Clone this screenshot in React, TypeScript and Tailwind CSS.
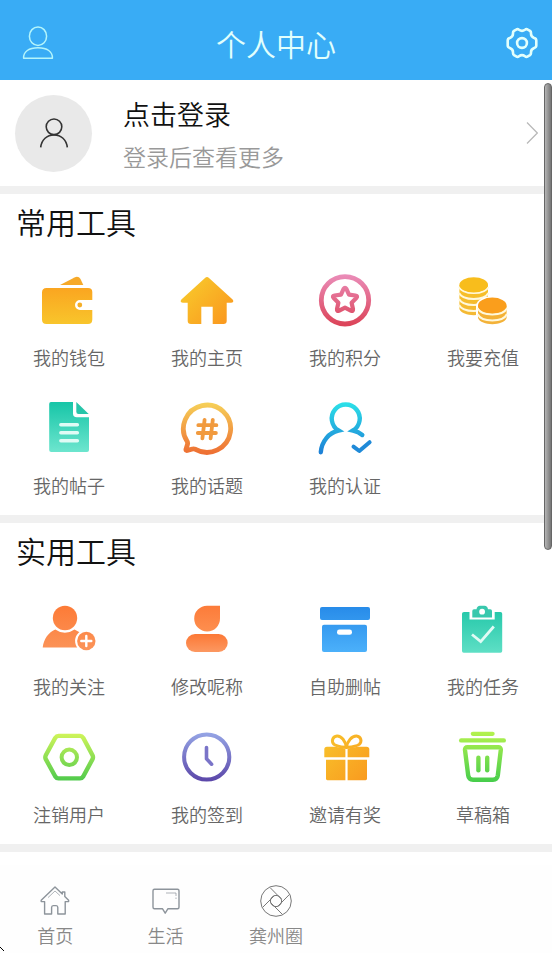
import type { ReactNode } from 'react';

type Tool = {
  label: string;
  icon: ReactNode;
};

// Every tool icon is drawn on a 60x60 canvas and filled with one gradient
function Gradient({ id, from, to, diagonal }: { id: string; from: string; to: string; diagonal?: boolean }) {
  return (
    <linearGradient id={id} gradientUnits="userSpaceOnUse" x1={diagonal ? 10 : 30} y1={diagonal ? 12 : 5} x2={diagonal ? 50 : 30} y2={diagonal ? 50 : 55}>
      <stop offset="0" stopColor={from} />
      <stop offset="1" stopColor={to} />
    </linearGradient>
  );
}

function ToolSvg({ children }: { children: ReactNode }) {
  return (
    <svg viewBox="0 0 60 60" className="w-[60px] h-[60px]" fill="none" strokeLinecap="round" strokeLinejoin="round" aria-hidden="true">
      {children}
    </svg>
  );
}

const commonTools: Tool[] = [
  {
    label: '我的钱包',
    icon: (
      <ToolSvg>
        <Gradient id="wallet" from="#fb9a1c" to="#f8c62c" />
        <path fill="#f6a928" d="M21 15 L35.5 7.4 Q39.5 5.8 41.5 9 L44.3 15 Z" />
        <path
          fill="url(#wallet)"
          d="M7.5 18 H49 Q53.3 18 53.3 22 V30 H41 A5 5 0 0 0 41 40 H53.3 V49.5 Q53.3 54 49 54 H7.5 Q3 54 3 49.5 V22.5 Q3 18 7.5 18 Z"
        />
        <circle cx="40.8" cy="35" r="2.4" fill="#f5ae27" />
      </ToolSvg>
    ),
  },
  {
    label: '我的主页',
    icon: (
      <ToolSvg>
        <Gradient id="home" from="#f8c82b" to="#fa9a1f" diagonal />
        <path
          fill="url(#home)"
          d="M28 8 Q30 6 32 8 L55.6 29.4 Q57 31 56 32 Q55.5 32.7 54 32.7 H49.7 V51 Q49.7 54 46.5 54 H35.7 V36.7 H24.3 V54 H14 Q10.7 54 10.7 51 V32.7 H6 Q4.5 32.7 4 32 Q3 31 4.4 29.4 Z"
        />
      </ToolSvg>
    ),
  },
  {
    label: '我的积分',
    icon: (
      <ToolSvg>
        <Gradient id="points" from="#ea8cb8" to="#dc4459" />
        <circle cx="30" cy="30.3" r="23.7" stroke="url(#points)" strokeWidth="4.8" />
        <path
          stroke="url(#points)"
          strokeWidth="4.2"
          d="M28.6 18.9 Q30 16.6 31.4 18.9 L34 24.6 L40.5 25.5 Q43.2 26 41.3 28 L36.6 32.7 L38 39 Q38.3 41.7 35.8 40.6 L30 37.6 L24.2 40.6 Q21.7 41.7 22 39 L23.4 32.7 L18.7 28 Q16.8 26 19.5 25.5 L26 24.6 Z"
        />
      </ToolSvg>
    ),
  },
  {
    label: '我要充值',
    icon: (
      <ToolSvg>
        <Gradient id="coinBack" from="#f8c31f" to="#f3b63a" />
        <Gradient id="coinFront" from="#f6ad20" to="#f3b23a" />
        <path fill="url(#coinBack)" d="M6.4 15 V39 C8 43 14 45.2 20.7 45.2 C27.4 45.2 33.4 43 35 39 V15 Z" />
        <g stroke="#fff8dc" strokeWidth="2" strokeLinecap="butt">
          <path d="M6 17 C10 25 31.4 25 35.4 17" />
          <path d="M6 23 C10 31 31.4 31 35.4 23" />
          <path d="M6 29 C10 37 31.4 37 35.4 29" />
          <path d="M6 35 C10 43 31.4 43 35.4 35" />
        </g>
        <ellipse cx="20.7" cy="14.8" rx="14.3" ry="7.6" fill="#f8bd1c" />
        <path fill="#fff" d="M23 36 C24 23 54.6 23 55.6 36 V58 H23 Z" />
        <path fill="url(#coinFront)" d="M25 36 V48 C26.6 52 32.6 54.2 39.3 54.2 C46 54.2 52 52 53.6 48 V36 Z" />
        <g stroke="#fff8dc" strokeWidth="2" strokeLinecap="butt">
          <path d="M24.6 38 C28.6 46.6 50 46.6 54 38" />
          <path d="M24.6 44 C28.6 52.6 50 52.6 54 44" />
        </g>
        <ellipse cx="39.3" cy="35.4" rx="14.3" ry="7.8" fill="#fa9e1c" />
      </ToolSvg>
    ),
  },
  {
    label: '我的帖子',
    icon: (
      <ToolSvg>
        <Gradient id="post" from="#18c6a8" to="#6fe6cf" />
        <path fill="url(#post)" d="M12 4 H34 V15.5 Q34 19.3 37.8 19.3 H50 V52 Q50 54 48 54 H12.2 Q10.2 54 10.2 52 V6 Q10.2 4 12 4 Z" />
        <path fill="#27c5a9" d="M37.3 4 L49.7 16 H39.5 Q37.3 16 37.3 13.8 Z" />
        <path stroke="#e0fbf5" strokeWidth="3.4" d="M21.8 26.7 H38.4 M21.8 34.7 H38.4 M21.8 42.7 H38.4" />
      </ToolSvg>
    ),
  },
  {
    label: '我的话题',
    icon: (
      <ToolSvg>
        <Gradient id="topic" from="#f6d058" to="#ee7033" />
        <path stroke="url(#topic)" strokeWidth="4.8" d="M18.5 51.3 A23.6 23.6 0 1 0 10.2 43.5 Q11 45 10.3 47 L9 51.2 Q8.6 52.8 10.3 52.4 L15.5 51 Q17 50.7 18.5 51.3 Z" />
        <path stroke="#f19a3e" strokeWidth="3.8" d="M21.3 27.2 H39.4 M20.8 35 H38.9 M27.6 21.8 L25.4 40.4 M35.8 21.8 L33.6 40.4" />
      </ToolSvg>
    ),
  },
  {
    label: '我的认证',
    icon: (
      <ToolSvg>
        <Gradient id="verify" from="#2ce0e8" to="#1d80d6" />
        <path
          stroke="url(#verify)"
          strokeWidth="4.4"
          strokeLinejoin="miter"
          strokeMiterlimit="8"
          d="M5.8 54.2 C6.6 43.5 14 34.5 23.5 32.5 A14 14 0 1 1 38 32.5 C42 33.4 45 35 47.3 37"
        />
        <path stroke="#1f8ad8" strokeWidth="4" d="M38.5 48.6 L44.3 53 L54.6 44.2" />
      </ToolSvg>
    ),
  },
];

const practicalTools: Tool[] = [
  {
    label: '我的关注',
    icon: (
      <ToolSvg>
        <Gradient id="follow" from="#fd7a35" to="#fb965c" />
        <path fill="url(#follow)" d="M3.7 48.4 C4.8 40 9.5 33.5 16.3 30.6 A16 16 0 0 0 35.5 30.6 L41 33.5 V48.4 Z" />
        <circle cx="26" cy="19" r="12.2" fill="url(#follow)" />
        <circle cx="47.3" cy="42" r="11.2" fill="#fff" />
        <circle cx="47.3" cy="42" r="9.2" fill="url(#follow)" />
        <path stroke="#fff" strokeWidth="2.4" d="M42.3 42 H52.3 M47.3 37 V47" />
      </ToolSvg>
    ),
  },
  {
    label: '修改呢称',
    icon: (
      <ToolSvg>
        <Gradient id="nickHead" from="#fc7a38" to="#fea062" />
        <path fill="url(#nickHead)" d="M30 6.7 H43 V19.5 A12.9 12.9 0 1 1 30 6.7 Z" />
        <linearGradient id="nickBody" x1="0" y1="0" x2="0" y2="1">
          <stop offset="0" stopColor="#fc7835" />
          <stop offset="1" stopColor="#fc9861" />
        </linearGradient>
        <rect x="9" y="35" width="41.7" height="18" rx="9" fill="url(#nickBody)" />
      </ToolSvg>
    ),
  },
  {
    label: '自助删帖',
    icon: (
      <ToolSvg>
        <Gradient id="archive" from="#2589e8" to="#4db2fb" />
        <rect x="5" y="8" width="50" height="13" rx="2" fill="url(#archive)" />
        <rect x="7" y="25.7" width="45" height="27.3" rx="2" fill="url(#archive)" />
        <rect x="22" y="30.6" width="15" height="5.2" rx="2.4" fill="#fff" />
      </ToolSvg>
    ),
  },
  {
    label: '我的任务',
    icon: (
      <ToolSvg>
        <Gradient id="task" from="#1cc4a5" to="#60e0c6" />
        <path fill="url(#task)" d="M11 13 H16.5 V20.6 H41.7 V13 H47.5 Q49.2 13 49.2 14.7 V52 Q49.2 53.7 47.5 53.7 H10.7 Q9 53.7 9 52 V14.7 Q9 13 11 13 Z" />
        <path
          fill="#38c8ad"
          fillRule="evenodd"
          d="M19.3 18.5 V12 Q19.3 10.3 21 10.3 H23.5 Q24 6.7 27 6.7 H31.5 Q34.5 6.7 35 10.3 H37.3 Q39 10.3 39 12 V18.5 Z M29.1 9.8 A2.9 2.9 0 1 0 29.1 15.6 A2.9 2.9 0 1 0 29.1 9.8 Z"
        />
        <path stroke="#e0fbf5" strokeWidth="2.8" strokeLinecap="butt" strokeLinejoin="miter" d="M19 35.5 L27.7 42.6 L40.8 27.5" />
      </ToolSvg>
    ),
  },
  {
    label: '注销用户',
    icon: (
      <ToolSvg>
        <Gradient id="cancel" from="#d4f65a" to="#4cc94c" />
        <path
          stroke="url(#cancel)"
          strokeWidth="4.4"
          d="M19.5 8.9 H41 Q43 8.9 44.2 10.8 L53.4 28 Q54.6 30.2 53.4 32.4 L44.2 49.5 Q43 51.4 41 51.4 H19.5 Q17.5 51.4 16.3 49.5 L6.9 32.4 Q5.7 30.2 6.9 28 L16.3 10.8 Q17.5 8.9 19.5 8.9 Z"
        />
        <circle cx="30.3" cy="30.3" r="7.7" stroke="url(#cancel)" strokeWidth="4" />
      </ToolSvg>
    ),
  },
  {
    label: '我的签到',
    icon: (
      <ToolSvg>
        <Gradient id="checkin" from="#96a6e6" to="#5a45a8" />
        <circle cx="29.7" cy="30" r="22.6" stroke="url(#checkin)" strokeWidth="4" />
        <path stroke="#7a74c8" strokeWidth="3.6" d="M29.5 20.6 V31.8 L34.6 37.2" />
      </ToolSvg>
    ),
  },
  {
    label: '邀请有奖',
    icon: (
      <ToolSvg>
        <Gradient id="gift" from="#f8c12a" to="#f99d20" diagonal />
        <path fill="url(#gift)" d="M12 19.8 H20 L30.4 21.5 V30.3 H9.3 V22.5 Q9.3 19.8 12 19.8 Z" />
        <path fill="url(#gift)" d="M43 19.8 H51.5 Q54.3 19.8 54.3 22.5 V30.3 H32.6 V21.5 Z" />
        <path stroke="url(#gift)" strokeWidth="3" d="M31.4 20.4 C30.5 14 26.5 8.8 22 9 C17.5 9.4 16 14.5 19 17.4 C22 19.8 27 20 31.4 20.4 Z" />
        <path stroke="url(#gift)" strokeWidth="3" d="M31.4 20.4 C32.3 14 37 8.8 41.5 9 C46 9.4 47.4 14.5 44.2 17.4 C41 19.8 36 20 31.4 20.4 Z" />
        <path fill="url(#gift)" d="M11 32.8 H30.4 V53.2 H12.4 Q11 53.2 11 51.8 Z M32.6 32.8 H52 V51.8 Q52 53.2 50.6 53.2 H32.6 Z" />
      </ToolSvg>
    ),
  },
  {
    label: '草稿箱',
    icon: (
      <ToolSvg>
        <Gradient id="draft" from="#b4f24e" to="#46cd4c" />
        <g fill="url(#draft)">
          <rect x="17.7" y="4.7" width="24" height="4.2" rx="2.1" />
          <rect x="6" y="11.2" width="47" height="4.4" rx="2.2" />
          <rect x="23.2" y="28.5" width="4.4" height="17" rx="2.2" />
          <rect x="32" y="28.5" width="4.4" height="17" rx="2.2" />
        </g>
        <path stroke="url(#draft)" strokeWidth="4.4" d="M14.5 20.2 H45.3 Q48 20.2 47.8 23 L44.8 48.5 Q44.2 52.7 40 52.7 H20 Q15.8 52.7 15.2 48.5 L12 23 Q11.8 20.2 14.5 20.2 Z" />
      </ToolSvg>
    ),
  },
];

const navItems: Tool[] = [
  {
    label: '首页',
    icon: (
      <svg viewBox="0 0 32 32" className="w-8 h-8" fill="none" stroke="#8d949b" strokeWidth="1.4" strokeLinejoin="round" aria-hidden="true">
        <path d="M16 2 L2.2 15.2 V16.6 H5.6 V29 H12.6 V22.4 Q12.6 20.6 14.2 20.6 H17.2 Q18.8 20.6 18.8 22.4 V29 H26.2 V16.6 H29.6 V15.2 L25.8 11.5 V7 H23.3 V9 Z" />
        <path d="M9 12.6 L16 6 L21 10.6" strokeWidth="0.7" />
      </svg>
    ),
  },
  {
    label: '生活',
    icon: (
      <svg viewBox="0 0 32 32" className="w-8 h-8" fill="none" stroke="#8d949b" strokeWidth="1.4" strokeLinejoin="round" aria-hidden="true">
        <path d="M4.5 4.3 H27.5 Q29 4.3 29 5.8 V22.2 Q29 23.7 27.5 23.7 H18 L15.2 28.2 L12.4 23.7 H4.5 Q3 23.7 3 22.2 V5.8 Q3 4.3 4.5 4.3 Z" />
        <path d="M16 8 H26 V11 M26 12.5 V14" strokeWidth="0.7" />
      </svg>
    ),
  },
  {
    label: '龚州圈',
    icon: (
      <svg viewBox="0 0 32 32" className="w-8 h-8" fill="none" stroke="#777" strokeWidth="1" aria-hidden="true">
        <circle cx="16" cy="16" r="15.3" />
        <circle cx="16" cy="16" r="5.6" />
        <path d="M10 2.5 L21.5 14.2 M29.5 9.4 L17.6 21.5 M22.6 29.6 L10.6 17.6 M2.6 22.4 L14.4 10.6" />
      </svg>
    ),
  },
];

function ToolSection({ title, tools }: { title: string; tools: Tool[] }) {
  return (
    <section className="bg-white border-b-8 border-[#f0f0f0]">
      <h2 className="px-4 pt-3 pb-4 text-[30px] leading-[30px] text-[#111]">{title}</h2>
      <div className="grid grid-cols-4 pt-[7px]">
        {tools.map((tool) => (
          <button key={tool.label} type="button" className="h-32 flex flex-col items-center gap-[15px] pt-[11px] cursor-pointer">
            {tool.icon}
            <span className="text-lg leading-6 text-[#666]">{tool.label}</span>
          </button>
        ))}
      </div>
    </section>
  );
}

export default function App() {
  return (
    <div className="relative min-h-screen flex flex-col bg-white font-['Noto_Sans_CJK_SC',sans-serif] font-[350]">
      <header className="h-20 px-[14px] pt-1.5 flex items-center justify-between bg-[#39acf5] text-[#e2fffc]">
        <button type="button" aria-label="我的" className="w-10 h-10 flex items-center justify-end cursor-pointer">
          <svg viewBox="0 0 32 34" className="w-8 h-[34px]" fill="none" stroke="#b4f5fb" strokeWidth="1.5" strokeLinejoin="round" aria-hidden="true">
            <ellipse cx="16" cy="10.2" rx="8.6" ry="9.3" />
            <path d="M1.6 32.3 C1.2 25.5 7 21.8 16 21.8 C25 21.8 30.8 25.5 30.4 32.3 Z" />
          </svg>
        </button>
        <h1 className="text-[30px] leading-10">个人中心</h1>
        <button type="button" aria-label="设置" className="w-10 h-10 flex items-center justify-end cursor-pointer">
          <svg viewBox="0 0 32 32" className="w-8 h-8" fill="none" stroke="#e2fffc" strokeWidth="2.6" strokeLinejoin="round" aria-hidden="true">
            <path d="M10.2 2.6 Q11.6 1.6 13 2.8 Q16 5 19 2.8 Q20.4 1.6 21.8 2.6 L24 3.9 Q25.2 4.8 25 6.4 Q24.8 9.8 28.2 11 Q30.3 11.6 30.3 13.4 V18.6 Q30.3 20.4 28.2 21 Q24.8 22.2 25 25.6 Q25.2 27.2 24 28.1 L21.8 29.4 Q20.4 30.4 19 29.2 Q16 27 13 29.2 Q11.6 30.4 10.2 29.4 L8 28.1 Q6.8 27.2 7 25.6 Q7.2 22.2 3.8 21 Q1.7 20.4 1.7 18.6 V13.4 Q1.7 11.6 3.8 11 Q7.2 9.8 7 6.4 Q6.8 4.8 8 3.9 Z" />
            <circle cx="16" cy="16" r="4.9" />
          </svg>
        </button>
      </header>

      <main>
        <button type="button" className="w-full h-[114px] flex items-center pl-[15px] pr-[14px] border-b-8 border-[#f0f0f0] bg-white text-left cursor-pointer">
          <span className="w-[77px] h-[77px] rounded-full bg-[#e9e9e9] flex items-center justify-center">
            <svg viewBox="0 0 30 30" className="w-[30px] h-[30px]" fill="none" stroke="#333" strokeWidth="1.6" aria-hidden="true">
              <circle cx="15" cy="8.8" r="7.8" />
              <path d="M1.7 29.4 C2.5 21.5 8 17 15 17 C22 17 27.5 21.5 28.3 29.4" />
            </svg>
          </span>
          <span className="ml-[31px] pt-1 flex-1 flex flex-col gap-0.5">
            <span className="text-[27px] leading-10 text-[#111]">点击登录</span>
            <span className="text-[23px] leading-10 text-[#999]">登录后查看更多</span>
          </span>
          <svg viewBox="0 0 12 24" className="w-3 h-6" fill="none" stroke="#b8b8b8" strokeWidth="1.2" aria-hidden="true">
            <path d="M1 1.5 L11.3 12 L1 22.5" />
          </svg>
        </button>
        <ToolSection title="常用工具" tools={commonTools} />
        <ToolSection title="实用工具" tools={practicalTools} />
      </main>

      <nav className="sticky bottom-0 mt-auto grid grid-cols-5 pt-5 pb-1 bg-[#fefefe]">
        {navItems.map((item) => (
          <a key={item.label} href="#" className="flex flex-col items-center gap-1 text-[#888]">
            {item.icon}
            <span className="text-lg leading-7">{item.label}</span>
          </a>
        ))}
      </nav>

      {/* scroll thumb */}
      <div className="absolute right-0 top-[83px] w-2 h-[467px] rounded-full border border-[#666] bg-linear-to-r from-[#b5b5b5] to-[#777]" />

      {/* tip of the mouse pointer */}
      <svg viewBox="0 0 4 6" className="absolute left-0 bottom-0 w-1 h-1.5" aria-hidden="true">
        <path d="M0 0 H1 V1 H2 V2 H3 V3 H4 V4 H3 V3 H2 V2 H1 V1 H0 Z" fill="#000" />
      </svg>
    </div>
  );
}
